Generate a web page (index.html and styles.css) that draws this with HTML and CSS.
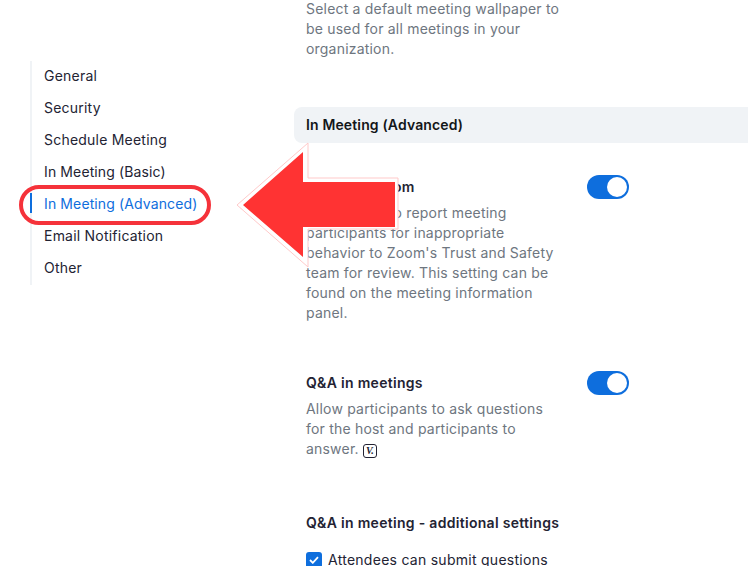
FILE: index.html
```html
<!DOCTYPE html>
<html lang="en">
<head>
<meta charset="utf-8">
<title>Meeting settings</title>
<link rel="stylesheet" href="styles.css">
</head>
<body>
<div class="page">
  <nav class="side">
    <ul class="menu">
      <li class="item">General</li>
      <li class="item">Security</li>
      <li class="item">Schedule Meeting</li>
      <li class="item tight">In Meeting (Basic)</li>
      <li class="item tight active">In Meeting (Advanced)</li>
      <li class="item">Email Notification</li>
      <li class="item">Other</li>
    </ul>
  </nav>
  <main class="main">
    <p class="desc intro">Select a default meeting wallpaper to be used for all meetings in your organization.</p>
    <h2 class="band">In Meeting (Advanced)</h2>
    <section class="setting first">
      <div class="text">
        <h3 class="title">Report to Zoom</h3>
        <p class="desc">Allow users to report meeting participants for inappropriate behavior to Zoom's Trust and Safety team for review. This setting can be found on the meeting information panel.</p>
      </div>
      <span class="toggle"><span class="knob"></span></span>
    </section>
    <section class="setting second">
      <div class="text">
        <h3 class="title">Q&amp;A in meetings</h3>
        <p class="desc">Allow participants to ask questions for the host and participants to answer. <span class="vmark">V.</span></p>
      </div>
      <span class="toggle"><span class="knob"></span></span>
    </section>
    <section class="extra">
      <h3 class="title">Q&amp;A in meeting - additional settings</h3>
      <label class="check">
        <span class="box"><svg width="10" height="8" viewBox="0 0 10 8"><path d="M1 4l2.8 2.8L9 1.2" fill="none" stroke="#fff" stroke-width="1.8"/></svg></span>
        Attendees can submit questions
      </label>
    </section>
  </main>
  <span class="ring"></span>
  <svg class="arrow" width="170" height="130" viewBox="0 0 170 130">
    <path d="M5 65 76 3V38H166V89H76V127Z" fill="#fff" stroke="#ffc9c9" stroke-width="1"/>
    <path d="M11 65 71 12V42H163V87H71V117Z" fill="#ff3333"/>
  </svg>
</div>
</body>
</html>
```
FILE: styles.css
```css
* { box-sizing: border-box; }
html, body { margin: 0; padding: 0; }
body {
  width: 748px;
  height: 566px;
  overflow: hidden;
  background: #fff;
  font-family: Inter, "Liberation Sans", sans-serif;
  font-size: 14px;
  line-height: 20px;
  color: #232333;
}
.page { position: relative; display: flex; width: 748px; height: 566px; overflow: hidden; }
.side { width: 294px; flex: none; padding: 61px 0 0 30px; }
.menu { list-style: none; margin: 0; padding: 0; border-left: 2px solid #f0f3f6; }
.item { position: relative; height: 32px; padding-left: 12px; line-height: 30px; white-space: nowrap; letter-spacing: 0.22px; }
.tight { letter-spacing: 0.12px; }
.active { color: #0e6edd; }
.active::before {
  content: "";
  position: absolute;
  left: -2px;
  top: 4px;
  width: 2px;
  height: 20px;
  background: #0e6edd;
}
.main { flex: 1; min-width: 0; margin-top: -1px; }
.desc { margin: 0; color: #6e7680; width: 250px; letter-spacing: 0.2px; }
.intro.desc { width: 260px; margin-left: 12px; }
.band {
  margin: 48px 0 0;
  height: 36px;
  padding-left: 12px;
  font-size: 14px;
  line-height: 36px;
  font-weight: 600;
  letter-spacing: 0.14px;
  color: #131619;
  background: #f0f3f6;
  border-radius: 8px 0 0 8px;
}
.title { margin: 0; font-size: 14px; line-height: 20px; font-weight: 600; letter-spacing: 0.3px; color: #232333; }
.setting { display: flex; align-items: flex-start; padding-left: 12px; }
.setting .title { margin-bottom: 6px; }
.text { width: 281px; flex: none; }
.first { margin-top: 34px; }
.second { margin-top: 50px; }
.toggle {
  width: 42px;
  height: 24px;
  margin-top: -2px;
  padding: 2px;
  border-radius: 12px;
  background: #0e6edd;
  display: flex;
  justify-content: flex-end;
}
.knob { width: 20px; height: 20px; border-radius: 50%; background: #fff; }
.vmark {
  display: inline-block;
  width: 14px;
  height: 14px;
  border: 1px solid #232333;
  border-radius: 3px;
  vertical-align: 0;
  font: italic 700 10px/12px "Liberation Serif", serif;
  letter-spacing: 0;
  text-align: center;
  color: #232333;
}
.extra { margin-top: 54px; padding-left: 12px; }
.check { display: flex; align-items: center; gap: 6px; margin-top: 17px; white-space: nowrap; letter-spacing: 0.27px; }
.box {
  width: 16px;
  height: 16px;
  border-radius: 3px;
  background: #0e6edd;
  display: flex;
  align-items: center;
  justify-content: center;
}
.ring {
  position: absolute;
  left: 19px;
  top: 185px;
  width: 192px;
  height: 40px;
  border: 4px solid #f5323a;
  border-radius: 20px;
}
.arrow { position: absolute; left: 232px; top: 140px; }
```
